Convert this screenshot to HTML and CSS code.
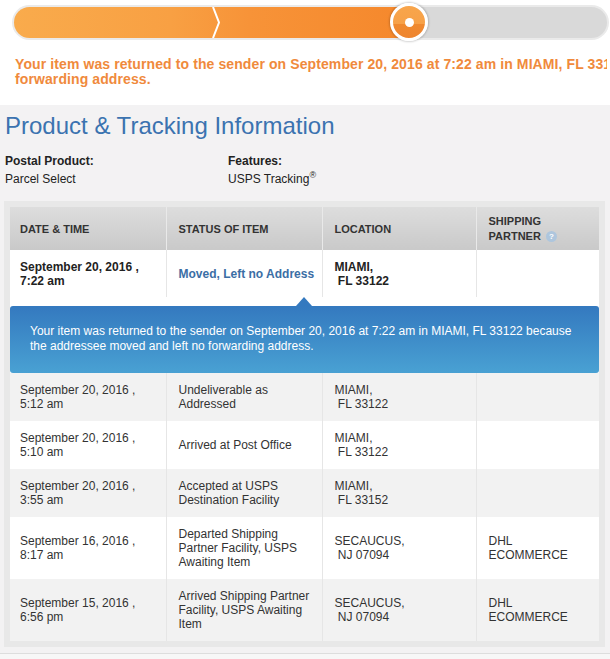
FILE: index.html
```html
<!DOCTYPE html>
<html lang="en">
<head>
<meta charset="utf-8">
<title>Product &amp; Tracking Information</title>
<link rel="stylesheet" href="styles.css">
</head>
<body>
<div class="top">
  <div class="track">
    <div class="fill"></div>
    <div class="rest"></div>
    <svg class="chevron" width="10" height="31" viewBox="0 0 10 31"><path d="M1 0 L7 15.5 L1 31" fill="none" stroke="#fff" stroke-width="2"/></svg>
    <div class="marker"><span class="dot"></span></div>
  </div>
  <div class="msg-clip">
    <p class="returned-msg">Your item was returned to the sender on September 20, 2016 at 7:22 am in MIAMI, FL 33122 because the addressee moved and left no<br>forwarding address.</p>
  </div>
</div>

<div class="section">
  <h1 class="title">Product &amp; Tracking Information</h1>
  <div class="product-info">
    <div class="info-col">
      <div class="info-label">Postal Product:</div>
      <div>Parcel Select</div>
    </div>
    <div class="info-col">
      <div class="info-label">Features:</div>
      <div>USPS Tracking<sup>®</sup></div>
    </div>
  </div>

  <div class="frame">
    <table class="tracking">
      <colgroup>
        <col class="c1"><col class="c2"><col class="c3"><col class="c4">
      </colgroup>
      <thead>
        <tr>
          <th class="first">DATE &amp; TIME</th>
          <th>STATUS OF ITEM</th>
          <th>LOCATION</th>
          <th>SHIPPING<br>PARTNER <span class="help">?</span></th>
        </tr>
      </thead>
      <tbody>
        <tr class="latest">
          <td class="first">September 20, 2016 ,<br>7:22 am</td>
          <td class="status-link">Moved, Left no Address</td>
          <td>MIAMI,<br>&nbsp;FL 33122</td>
          <td></td>
        </tr>
        <tr class="callout-row">
          <td colspan="4">
            <div class="callout">Your item was returned to the sender on September 20, 2016 at 7:22 am in MIAMI, FL 33122 because the addressee moved and left no forwarding address.</div>
          </td>
        </tr>
        <tr class="alt">
          <td class="first">September 20, 2016 ,<br>5:12 am</td>
          <td>Undeliverable as<br>Addressed</td>
          <td>MIAMI,<br>&nbsp;FL 33122</td>
          <td></td>
        </tr>
        <tr>
          <td class="first">September 20, 2016 ,<br>5:10 am</td>
          <td>Arrived at Post Office</td>
          <td>MIAMI,<br>&nbsp;FL 33122</td>
          <td></td>
        </tr>
        <tr class="alt">
          <td class="first">September 20, 2016 ,<br>3:55 am</td>
          <td>Accepted at USPS<br>Destination Facility</td>
          <td>MIAMI,<br>&nbsp;FL 33152</td>
          <td></td>
        </tr>
        <tr>
          <td class="first">September 16, 2016 ,<br>8:17 am</td>
          <td>Departed Shipping<br>Partner Facility, USPS<br>Awaiting Item</td>
          <td>SECAUCUS,<br>&nbsp;NJ 07094</td>
          <td>DHL<br>ECOMMERCE</td>
        </tr>
        <tr class="alt">
          <td class="first">September 15, 2016 ,<br>6:56 pm</td>
          <td>Arrived Shipping Partner<br>Facility, USPS Awaiting<br>Item</td>
          <td>SECAUCUS,<br>&nbsp;NJ 07094</td>
          <td>DHL<br>ECOMMERCE</td>
        </tr>
      </tbody>
    </table>
  </div>
</div>
<div class="below"></div>
</body>
</html>
```

FILE: styles.css
```css
html, body {
  margin: 0;
  padding: 0;
}
body {
  width: 610px;
  height: 659px;
  overflow: hidden;
  background: #fff;
  font-family: "Liberation Sans", Arial, sans-serif;
  color: #333;
}

/* progress */
.top {
  padding: 5px 0 0 12px;
  height: 100px;
}
.track {
  position: relative;
  width: 593px;
  height: 31px;
  padding: 2px;
  border-radius: 18px;
  background: #eaeaea;
  display: flex;
}
.fill {
  width: 392px;
  border-radius: 16px 0 0 16px;
  background: linear-gradient(to right, #f9ab4c, #f8a043 40%, #f79338 60%, #f5882c);
}
.rest {
  flex: 1;
  border-radius: 0 16px 16px 0;
  background: #d9d9d9;
}
.chevron {
  position: absolute;
  left: 200px;
  top: 2px;
}
.marker {
  position: absolute;
  left: 378px;
  top: -2px;
  width: 32px;
  height: 32px;
  border: 3px solid #fff;
  border-radius: 50%;
  background: linear-gradient(to bottom, #f8a54b 0, #f7a148 55%, #f08a2f 55%, #ee8530 100%);
  box-shadow: 0 0 2px 1px rgba(0, 0, 0, 0.18);
  display: flex;
  align-items: center;
  justify-content: center;
}
.dot {
  width: 9px;
  height: 9px;
  border-radius: 50%;
  background: #fff;
}
.msg-clip {
  width: 595px;
  overflow: hidden;
}
.returned-msg {
  margin: 17px 0 0 3px;
  font-size: 14px;
  line-height: 15px;
  font-weight: bold;
  letter-spacing: 0.1px;
  color: #f08a3c;
  white-space: nowrap;
}

/* gray section */
.section {
  background: #f3f2f3;
  padding: 7px 4px 6px 5px;
  border-bottom: 1px solid #dddddd;
}
.title {
  margin: 0;
  font-size: 24px;
  line-height: 28px;
  font-weight: normal;
  color: #3b73b0;
}
.product-info {
  display: flex;
  margin-top: 12px;
  font-size: 12px;
  line-height: 18px;
  color: #222;
}
.info-col:first-child {
  width: 223px;
}
.info-label {
  font-weight: bold;
}
.product-info sup {
  font-size: 9px;
  line-height: 0;
}

.frame {
  margin: 13px 0 0 -1px;
  padding: 6px;
  background: #e8e8e8;
  width: 589px;
}
.tracking {
  width: 589px;
  border-collapse: collapse;
  table-layout: fixed;
  font-size: 12px;
  line-height: 14px;
}
.c1 { width: 156px; }
.c2 { width: 156px; }
.c3 { width: 154px; }
.c4 { width: 123px; }

.tracking th {
  text-align: left;
  font-size: 11px;
  line-height: 15px;
  font-weight: bold;
  color: #333;
  padding: 7px 11px 6px 12px;
  background: linear-gradient(to bottom, #dddddd, #c9c9c9);
  border-left: 1px solid #e9e9e9;
  vertical-align: middle;
}
.tracking th.first {
  border-left: none;
  padding-left: 10px;
}
.help {
  display: inline-block;
  width: 11px;
  height: 11px;
  border-radius: 50%;
  background: #aec6dd;
  color: #fff;
  font-size: 8px;
  line-height: 11px;
  text-align: center;
  vertical-align: 1px;
  margin-left: 2px;
}

.tracking td {
  padding: 10px 11px 10px 12px;
  vertical-align: middle;
  background: #fff;
  border-left: 1px solid #e6e6e6;
  color: #333;
}
.tracking td.first {
  border-left: none;
  padding-left: 10px;
}
.tracking tr.alt td {
  background: #f2f2f2;
}
.tracking tr.latest td {
  font-weight: bold;
  color: #222;
  padding-bottom: 9px;
}
.tracking tr.latest td.status-link {
  color: #3b6ea5;
  white-space: nowrap;
  padding-right: 4px;
}

.tracking tr.callout-row td {
  padding: 9px 0 0 0;
  border-left: none;
  background: #fff;
}
.callout {
  position: relative;
  border-radius: 3px;
  background: linear-gradient(to bottom, #3479bf, #49a1d3);
  color: #fff;
  font-size: 12px;
  line-height: 15px;
  padding: 18px 20px 19px 20px;
}
.callout::before {
  content: "";
  position: absolute;
  left: 286px;
  top: -9px;
  border-left: 8px solid transparent;
  border-right: 8px solid transparent;
  border-bottom: 9px solid #3479bf;
}

.below {
  height: 10px;
  background: #f7f7f7;
}
```
